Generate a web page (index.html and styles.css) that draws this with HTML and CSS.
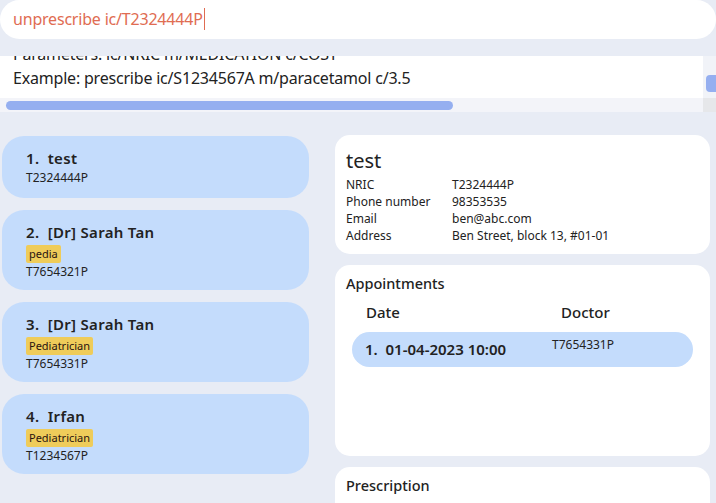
FILE: index.html
```html
<!DOCTYPE html>
<html>
<head>
<meta charset="utf-8">
<link rel="stylesheet" href="styles.css">
</head>
<body>
<div class="command">
  <span class="command-text">unprescribe ic/T2324444P</span><span class="caret"></span>
</div>
<div class="result">
  <div class="result-row">
    <div class="result-view">
      <div class="result-text">
        <div class="line">Parameters: ic/NRIC m/MEDICATION c/COST</div>
        <div class="line">Example: prescribe ic/S1234567A m/paracetamol c/3.5</div>
      </div>
    </div>
    <div class="vscroll"><div class="vthumb"></div></div>
  </div>
  <div class="hscroll-row">
    <div class="hscroll"><div class="hthumb"></div></div>
    <div class="corner"></div>
  </div>
</div>
<div class="main">
  <div class="list">
    <div class="card">
      <div class="name">1.&nbsp;&nbsp;test</div>
      <div class="nric">T2324444P</div>
    </div>
    <div class="card">
      <div class="name">2.&nbsp;&nbsp;[Dr] Sarah Tan</div>
      <div class="tags"><span class="tag">pedia</span></div>
      <div class="nric">T7654321P</div>
    </div>
    <div class="card">
      <div class="name">3.&nbsp;&nbsp;[Dr] Sarah Tan</div>
      <div class="tags"><span class="tag">Pediatrician</span></div>
      <div class="nric">T7654331P</div>
    </div>
    <div class="card">
      <div class="name">4.&nbsp;&nbsp;Irfan</div>
      <div class="tags"><span class="tag">Pediatrician</span></div>
      <div class="nric">T1234567P</div>
    </div>
  </div>
  <div class="side">
    <div class="panel details">
      <div class="d-name">test</div>
      <div class="d-grid">
        <span>NRIC</span><span>T2324444P</span>
        <span>Phone number</span><span>98353535</span>
        <span>Email</span><span>ben@abc.com</span>
        <span>Address</span><span>Ben Street, block 13, #01-01</span>
      </div>
    </div>
    <div class="panel appts">
      <div class="p-title">Appointments</div>
      <div class="a-head"><span class="h-date">Date</span><span class="h-doc">Doctor</span></div>
      <div class="a-row">
        <span class="a-date">1.&nbsp;&nbsp;01-04-2023 10:00</span>
        <span class="a-doc">T7654331P</span>
      </div>
    </div>
    <div class="panel presc">
      <div class="p-title">Prescription</div>
    </div>
  </div>
</div>
</body>
</html>
```

FILE: styles.css
```css
* { box-sizing: border-box; }
html, body { margin: 0; padding: 0; }
body {
  width: 716px;
  height: 503px;
  overflow: hidden;
  background: #e8ecf5;
  font-family: "Noto Sans", "Open Sans", sans-serif;
  color: #222;
}
.command {
  height: 39px;
  background: #fff;
  border-radius: 20px;
  display: flex;
  align-items: center;
  padding-left: 13px;
  padding-bottom: 1px;
}
.command-text {
  font-size: 16px;
  color: #e06c52;
  letter-spacing: -0.2px;
}
.caret {
  display: inline-block;
  width: 1px;
  height: 22px;
  background: #e06c52;
  margin-left: 1px;
}
.result {
  margin-top: 17px;
}
.result-row {
  display: flex;
  height: 42px;
}
.result-view {
  width: 703px;
  background: #fff;
  overflow: hidden;
}
.result-text {
  margin-top: -14px;
  padding-left: 13px;
  font-size: 16px;
  line-height: 24px;
  white-space: nowrap;
  letter-spacing: -0.2px;
}
.vscroll {
  width: 13px;
  background: #f1f3f8;
  padding-top: 19px;
  padding-left: 3px;
}
.vthumb {
  width: 10px;
  height: 17px;
  background: #95aff0;
  border-radius: 4px 0 0 4px;
}
.hscroll-row {
  display: flex;
  height: 14px;
}
.hscroll {
  width: 703px;
  background: #f3f4f9;
  padding: 3px 0 0 6px;
}
.hthumb {
  width: 447px;
  height: 9px;
  background: #95aff0;
  border-radius: 5px;
}
.corner {
  width: 13px;
  background: #e6e7ea;
}
.main {
  display: flex;
  gap: 26px;
  padding-top: 23px;
  padding-left: 2px;
}
.list {
  width: 307px;
  display: flex;
  flex-direction: column;
  gap: 12px;
  padding-top: 1px;
}
.card {
  background: #c4dcfc;
  border-radius: 22px;
  padding: 12px 24px 0;
}
.card:first-child { height: 62px; }
.card:not(:first-child) { height: 80px; }
.name {
  font-size: 15px;
  font-weight: 600;
  line-height: 20px;
  letter-spacing: 0.3px;
  color: #222;
}
.nric {
  font-size: 12px;
  line-height: 17px;
  margin-top: 1px;
}
.tags {
  display: flex;
  margin-top: 3px;
  height: 18px;
}
.tags + .nric { margin-top: 0; }
.tag {
  display: block;
  background: #efcc5a;
  border-radius: 2px;
  font-size: 11px;
  line-height: 18px;
  padding: 0 3px;
  color: #2a1410;
}
.side {
  width: 375px;
  display: flex;
  flex-direction: column;
  gap: 11px;
}
.panel {
  background: #fff;
  border-radius: 15px;
  padding: 0 11px;
}
.details {
  height: 119px;
  padding-top: 13px;
}
.d-name {
  font-size: 20px;
  line-height: 26px;
}
.d-grid {
  display: grid;
  grid-template-columns: 106px 1fr;
  font-size: 12px;
  line-height: 17px;
  margin-top: 2px;
}
.appts {
  height: 191px;
  padding-top: 8px;
}
.p-title {
  font-size: 14.5px;
  font-weight: 500;
  line-height: 20px;
}
.a-head {
  display: flex;
  font-size: 15px;
  font-weight: 500;
  line-height: 20px;
  margin-top: 9px;
}
.h-date { margin-left: 20px; width: 195px; }
.a-row {
  margin: 10px 6px 0;
  height: 35px;
  background: #c4dcfc;
  border-radius: 18px;
  display: flex;
  align-items: flex-start;
}
.a-date {
  font-size: 15px;
  font-weight: 600;
  margin-left: 13px;
  line-height: 20px;
  margin-top: 7px;
  width: 187px;
}
.a-doc {
  font-size: 12px;
  line-height: 16px;
  margin-top: 5px;
}
.presc {
  height: 60px;
  padding-top: 8px;
}
```
